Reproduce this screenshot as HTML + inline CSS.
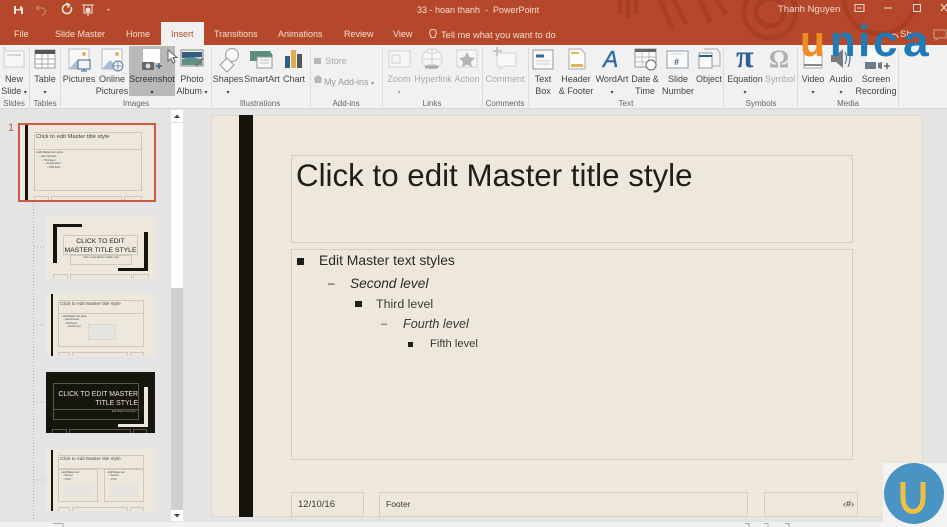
<!DOCTYPE html>
<html><head><meta charset="utf-8"><style>
*{box-sizing:border-box}
html,body{margin:0;padding:0}
body{width:947px;height:527px;overflow:hidden;position:relative;background:#e4e4e5;font-family:"Liberation Sans",sans-serif;filter:blur(.3px)}
.a{position:absolute;white-space:nowrap}
.t{position:absolute;top:29px;font-size:9px;color:#f3ddd3;white-space:nowrap}
.l{position:absolute;font-size:9px;line-height:12px;color:#444;text-align:center;white-space:nowrap;transform:translateX(-50%)}
.l i{font-style:normal;font-size:6px}
.g{color:#a9a9a9}
.c{position:absolute;top:99px;font-size:8px;color:#666;white-space:nowrap;transform:translateX(-50%)}
.s{position:absolute;top:47px;width:1px;height:60px;background:#dcdcdc}
.th{position:absolute;background:#ede7dc;overflow:hidden}
.box{position:absolute;border:1px solid #cfc8bd;white-space:nowrap}
.mb{position:absolute;border:1px solid #d4cdc2}
.u{position:absolute;top:17px;font-size:44px;line-height:50px;font-weight:700;color:#1f7ab8;transform-origin:left}
svg{position:absolute;overflow:visible}
</style></head><body>
<!-- title bar -->
<div class="a" style="left:0;top:0;width:947px;height:45px;background:#b5482a"></div>
<svg style="left:0;top:0" width="947" height="45" viewBox="0 0 947 45"><g fill="none" stroke="#a83f24" stroke-width="5"><circle cx="770" cy="12" r="14"/><circle cx="770" cy="12" r="26"/><circle cx="880" cy="-2" r="36"/><path d="M620 0v14M628 0v18M636 0v14M660 0l12 28M674 0l12 24M700 0l10 22M716 0l10 14"/></g></svg>
<svg style="left:0;top:0" width="120" height="22" viewBox="0 0 120 22"><path d="M14 6h7l2 2v6h-9z" fill="#f4e7e1"/><rect x="16" y="6" width="4" height="3" fill="#b5482a"/><rect x="16" y="10.500" width="5" height="3.500" fill="#b5482a"/><path d="M36 8h6a3.500 3.500 0 0 1 0 7M36 8l3-2.500M36 8l3 2.500" stroke="#c98068" fill="none" stroke-width="1.300"/><path d="M69 5a4.500 4.500 0 1 0 2 2M66.500 3l3 2-2 2.500" stroke="#f6ebe5" fill="none" stroke-width="1.500"/><path d="M82 5h12M84 5v8h8V5M88 13v3" stroke="#e9c9bb" fill="none" stroke-width="1.200"/><circle cx="88" cy="10" r="2.500" fill="#f1dbd2"/><path d="M107 9h3l-1.500 2z" fill="#e9c9bb"/></svg>
<div class="a" style="left:417px;top:5px;font-size:9px;color:#f3ddd3">33 - hoan thanh&nbsp; -&nbsp; PowerPoint</div>
<div class="a" style="left:778px;top:4px;font-size:9.500px;color:#f1dcd3">Thanh Nguyen</div>
<svg style="left:850px;top:0" width="97" height="20" viewBox="0 0 97 20"><rect x="5" y="4.500" width="9" height="7" fill="none" stroke="#f3ddd3"/><path d="M7 8h5" stroke="#f3ddd3"/><path d="M34 8h8" stroke="#f3ddd3"/><rect x="63.500" y="4.500" width="7" height="7" fill="none" stroke="#f3ddd3"/><path d="M91 4l6 7M97 4l-6 7" stroke="#f3ddd3"/></svg>
<!-- tabs -->
<div class="t" style="left:14px">File</div>
<div class="t" style="left:55px">Slide Master</div>
<div class="t" style="left:126px">Home</div>
<div class="a" style="left:161px;top:22px;width:43px;height:23px;background:#f1f1f1"></div>
<div class="t" style="left:171px;color:#b5482a">Insert</div>
<div class="t" style="left:214px">Transitions</div>
<div class="t" style="left:278px">Animations</div>
<div class="t" style="left:344px">Review</div>
<div class="t" style="left:393px">View</div>
<div class="t" style="left:441px;top:30px;font-size:9.300px">Tell me what you want to do</div>
<svg style="left:428px;top:28px" width="10" height="12" viewBox="0 0 10 12"><path d="M3 8C1 6 1 1.500 5 1.500S9 6 7 8v1.500H3z" fill="none" stroke="#f0d4c7"/></svg>
<svg style="left:885px;top:26px" width="62" height="18" viewBox="0 0 62 18"><path d="M5 12a4 4 0 1 1 8 0" fill="none" stroke="#f3ddd3"/><path d="M49 4h12v8h-8l-2 2v-2h-2z" fill="none" stroke="#d99a82"/></svg>
<div class="a" style="left:900px;top:29px;font-size:9.500px;color:#f3ddd3">Sh</div>
<!-- ribbon -->
<div class="a" style="left:0;top:45px;width:947px;height:64px;background:#f1f1f1;border-bottom:1px solid #d8d8d8"></div>
<div class="a" style="left:129px;top:46px;width:46px;height:50px;background:#b9b9b9"></div>
<div class="s" style="left:29px"></div><div class="s" style="left:60px"></div><div class="s" style="left:211px"></div><div class="s" style="left:310px"></div><div class="s" style="left:382px"></div><div class="s" style="left:482px"></div><div class="s" style="left:528px"></div><div class="s" style="left:723px"></div><div class="s" style="left:797px"></div><div class="s" style="left:898px"></div>
<!-- ribbon icons -->
<svg style="left:0;top:45px" width="947" height="40" viewBox="0 45 947 40">
<rect x="4" y="51" width="20" height="16" fill="#f7f7f7" stroke="#cfcfcf"/><path d="M7 55h14" stroke="#d5d5d5" stroke-width="2"/><path d="M3 47l3 3" stroke="#ccc"/>
<rect x="35" y="50" width="20" height="18" fill="#fff" stroke="#999"/><rect x="35" y="50" width="20" height="4" fill="#555"/><path d="M35 59h20M35 64h20M42 54v14M48 54v14" stroke="#aaa"/>
<rect x="69" y="49" width="20" height="20" fill="#f8f8f8" stroke="#bbb"/><path d="M69 69l8-9 7 7 2 2z" fill="#a8bfd6"/><circle cx="84" cy="54" r="2" fill="#d8b566"/><rect x="78" y="60" width="12" height="9" fill="#f5f5f5" stroke="#41658a"/><path d="M84 69v2M81 71h6" stroke="#41658a"/>
<rect x="102" y="49" width="20" height="20" fill="#f8f8f8" stroke="#bbb"/><path d="M102 69l8-9 7 7 2 2z" fill="#a8bfd6"/><circle cx="117" cy="54" r="2" fill="#d8b566"/><circle cx="118" cy="66" r="5" fill="#f1f1f1" stroke="#5e82a6"/><path d="M113 66h10M118 61v10" stroke="#5e82a6" stroke-width=".7"/>
<rect x="143" y="49" width="17" height="14" fill="#fdfdfd"/><rect x="142" y="62" width="12" height="8" rx="1" fill="#666"/><circle cx="148" cy="66" r="2.500" fill="#ddd"/><path d="M156 66h6M159 63v6" stroke="#41658a" stroke-width="1.500"/>
<rect x="181" y="50" width="22" height="16" fill="#eee" stroke="#888"/><path d="M182 52h20v5l-20 1z" fill="#365a80"/><path d="M182 59l8-2 12 2v6h-20z" fill="#5d9184"/><path d="M196 66l7-8" stroke="#777" stroke-width="2"/>
<circle cx="232" cy="55" r="6.500" fill="#f8f8f8" stroke="#999"/><path d="M227 58l7 7-7 7-7-7z" fill="#f8f8f8" stroke="#999"/>
<path d="M250 51h20l3 5-3 5h-20z" fill="#5b8d80"/><rect x="257" y="57" width="15" height="11" fill="#f8f8f8" stroke="#999"/><path d="M260 60h9M260 63h9" stroke="#bbb"/>
<rect x="285" y="56" width="5" height="12" fill="#2e5f85"/><rect x="291" y="50" width="5" height="18" fill="#dcae4f"/><rect x="297" y="54" width="5" height="14" fill="#555"/>
<path d="M314 58h7v6h-7z" fill="#b6b6b6"/><path d="M314 78l4-3 4 3-1 5h-6z" fill="#b6b6b6"/>
<g fill="#f6f6f6" stroke="#d2d2d2"><rect x="389" y="51" width="21" height="16"/><rect x="392" y="55" width="8" height="8"/><circle cx="432" cy="59" r="10"/><path d="M423 59h18M432 49v20M426 52q6 3 12 0M426 66q6-3 12 0" fill="none"/><rect x="457" y="50" width="20" height="17"/></g>
<path d="M425 67h13" stroke="#aaa" stroke-width="3"/>
<path d="M467 52l2.500 5 5.500 1-4 4 1 5-5-2.500-5 2.500 1-5-4-4 5.500-1z" fill="#b5b5b5"/>
<path d="M497 53h19v13h-12l-4 3v-3h-3z" fill="#f8f8f8" stroke="#d4d4d4"/><path d="M497 47v9M493 51h9" stroke="#c6c6c6" stroke-width="2"/>
<rect x="533" y="50" width="20" height="19" fill="#f8f8f8" stroke="#999"/><path d="M536 56h8" stroke="#41658a" stroke-width="3"/><path d="M536 61h14M536 64h14" stroke="#ccc"/>
<path d="M569 49h12l4 5v15h-16z" fill="#fbfbfb" stroke="#aaa"/><rect x="571" y="52" width="8" height="2" fill="#e0b75a"/><rect x="571" y="64" width="12" height="3" fill="#e0b75a"/>
<text x="603" y="67" font-family="Liberation Sans" font-style="italic" font-size="23" fill="#2d6ca8" stroke="#2d6ca8" stroke-width=".4">A</text>
<rect x="635" y="49" width="21" height="18" fill="#fbfbfb" stroke="#999"/><rect x="635" y="49" width="21" height="3" fill="#666"/><path d="M635 57h21M635 62h21M642 52v15M649 52v15" stroke="#bbb"/><circle cx="651" cy="65" r="5" fill="#fff" stroke="#666"/>
<rect x="667" y="51" width="21" height="17" fill="#fbfbfb" stroke="#8a9db0"/><path d="M671 54h13" stroke="#ccc"/><text x="674" y="65" font-family="Liberation Sans" font-weight="700" font-size="9" fill="#41658a">#</text>
<rect x="699" y="53" width="13" height="15" fill="#fbfbfb" stroke="#999"/><path d="M699 56h13" stroke="#2e5f85" stroke-width="2"/><path d="M704 49h13l3 4v13h-8" fill="none" stroke="#aaa"/>
<text x="736" y="67" font-family="Liberation Serif" font-weight="700" font-size="32" fill="#2d5f96">π</text>
<text x="769" y="67" font-family="Liberation Serif" font-weight="700" font-size="25" fill="#aeaeae">Ω</text>
<rect x="804" y="53" width="18" height="15" fill="#fbfbfb" stroke="#aaa"/><path d="M804 65h18" stroke="#888" stroke-width="2"/>
<path d="M831 55h5l7-6v19l-7-6h-5z" fill="#7a7a7a"/><path d="M845 52q3 6 0 12M848 49q4 9 0 18" stroke="#41658a" fill="none"/>
<rect x="867" y="49" width="17" height="13" fill="#fafafa"/><rect x="865" y="62" width="11" height="7" fill="#6d7d8c"/><path d="M878 63l4-1v7l-4-1z" fill="#6d7d8c"/><path d="M884 66h6M887 63v6" stroke="#555" stroke-width="1.300"/>
</svg>
<!-- ribbon labels -->
<div class="l" style="left:14px;top:73px">New<br>Slide <i>▾</i></div>
<div class="l" style="left:45px;top:73px">Table<br><i>▾</i></div>
<div class="l" style="left:79px;top:73px">Pictures</div>
<div class="l" style="left:112px;top:73px">Online<br>Pictures</div>
<div class="l" style="left:152px;top:73px;color:#333">Screenshot<br><i>▾</i></div>
<div class="l" style="left:192px;top:73px">Photo<br>Album <i>▾</i></div>
<div class="l" style="left:228px;top:73px">Shapes<br><i>▾</i></div>
<div class="l" style="left:262px;top:73px">SmartArt</div>
<div class="l" style="left:294px;top:73px">Chart</div>
<div class="l g" style="left:336px;top:55px">Store</div>
<div class="l g" style="left:349px;top:76px;color:#999">My Add-ins <i>▾</i></div>
<div class="l g" style="left:399px;top:73px">Zoom<br><i>▾</i></div>
<div class="l g" style="left:433px;top:73px">Hyperlink</div>
<div class="l g" style="left:467px;top:73px">Action</div>
<div class="l g" style="left:505px;top:73px">Comment</div>
<div class="l" style="left:543px;top:73px">Text<br>Box</div>
<div class="l" style="left:576px;top:73px">Header<br>&amp; Footer</div>
<div class="l" style="left:612px;top:73px">WordArt<br><i>▾</i></div>
<div class="l" style="left:645px;top:73px">Date &amp;<br>Time</div>
<div class="l" style="left:678px;top:73px">Slide<br>Number</div>
<div class="l" style="left:709px;top:73px">Object</div>
<div class="l" style="left:745px;top:73px">Equation<br><i>▾</i></div>
<div class="l g" style="left:780px;top:73px">Symbol</div>
<div class="l" style="left:813px;top:73px">Video<br><i>▾</i></div>
<div class="l" style="left:841px;top:73px">Audio<br><i>▾</i></div>
<div class="l" style="left:876px;top:73px">Screen<br>Recording</div>
<div class="c" style="left:14px">Slides</div><div class="c" style="left:45px">Tables</div><div class="c" style="left:136px">Images</div><div class="c" style="left:260px">Illustrations</div><div class="c" style="left:346px">Add-ins</div><div class="c" style="left:432px">Links</div><div class="c" style="left:505px">Comments</div><div class="c" style="left:626px">Text</div><div class="c" style="left:761px">Symbols</div><div class="c" style="left:848px">Media</div>
<svg style="left:167px;top:49px" width="11" height="16" viewBox="0 0 11 16"><path d="M1 1v11l3-2.500 2 4.500 2-1-2-4.500h4z" fill="#fff" stroke="#666"/></svg>
<!-- unica logo -->
<div class="u" style="left:800px;color:#f08c24;transform:scaleX(.93)">u</div>
<div class="u" style="left:829.500px;transform:scaleX(.95)">n</div>
<div class="u" style="left:858px">i</div>
<div class="u" style="left:873px">c</div>
<div class="u" style="left:903px;transform:scaleX(1.050)">a</div>
<!-- left pane -->
<div class="a" style="left:8px;top:122px;font-size:11px;color:#c55a3f">1</div>
<svg style="left:30px;top:203px" width="20" height="318"><path d="M3.500 0V318M4 44h11M4 122h11M4 199h11M4 277h11" stroke="#b5b5b5" stroke-dasharray="1 2" fill="none"/></svg>
<div class="a" style="left:171px;top:110px;width:12px;height:400px;background:#cfcfd0"></div>
<div class="a" style="left:171px;top:110px;width:12px;height:178px;background:#fff"></div>
<div class="a" style="left:171px;top:110px;width:12px;height:13px;background:#fff;border-bottom:1px solid #e0e0e0"></div>
<svg style="left:171px;top:111px" width="12" height="12"><path d="M3 7h6L6 3.500z" fill="#444"/></svg>
<div class="a" style="left:171px;top:510px;width:12px;height:11px;background:#fff"></div>
<svg style="left:171px;top:511px" width="12" height="10"><path d="M3 3h6L6 6.500z" fill="#444"/></svg>
<!-- thumb 1 -->
<div class="th" style="left:18px;top:123px;width:138px;height:79px;border:2px solid #cc5a40">
<div class="a" style="left:5px;top:0;width:3px;height:75px;background:#15150f"></div>
<div class="box" style="left:14px;top:7px;width:108px;height:18px"><div class="a" style="left:1px;top:1px;font-size:5.800px;color:#444">Click to edit Master title style</div></div>
<div class="box" style="left:14px;top:24px;width:108px;height:42px"><div class="a" style="left:1px;top:1px;font-size:2.600px;line-height:3.800px;color:#444">▪ Edit Master text styles<br>&nbsp;&nbsp;&nbsp;&nbsp;– Second level<br>&nbsp;&nbsp;&nbsp;&nbsp;&nbsp;&nbsp;&nbsp;&nbsp;▪ Third level<br>&nbsp;&nbsp;&nbsp;&nbsp;&nbsp;&nbsp;&nbsp;&nbsp;&nbsp;&nbsp;&nbsp;&nbsp;– Fourth level<br>&nbsp;&nbsp;&nbsp;&nbsp;&nbsp;&nbsp;&nbsp;&nbsp;&nbsp;&nbsp;&nbsp;&nbsp;&nbsp;&nbsp;&nbsp;&nbsp;▪ Fifth level</div></div>
<div class="box" style="left:14px;top:71px;width:15px;height:8px"></div><div class="box" style="left:31px;top:71px;width:71px;height:8px"></div><div class="box" style="left:104px;top:71px;width:18px;height:8px"></div>
</div>
<!-- thumb 2 -->
<div class="th" style="left:46px;top:217px;width:109px;height:62px">
<div class="a" style="left:7px;top:7px;width:29px;height:3px;background:#15150f"></div><div class="a" style="left:7px;top:7px;width:4px;height:39px;background:#15150f"></div>
<div class="a" style="left:72px;top:51px;width:30px;height:3px;background:#15150f"></div><div class="a" style="left:98px;top:15px;width:4px;height:39px;background:#15150f"></div>
<div class="box" style="left:17px;top:18px;width:75px;height:20px;font-size:6.800px;line-height:9px;color:#222;text-align:center;padding-top:1px">CLICK TO EDIT<br>MASTER TITLE STYLE</div>
<div class="box" style="left:24px;top:38px;width:62px;height:10px;font-size:2.500px;color:#555;text-align:center">Click to edit Master subtitle style</div>
<div class="box" style="left:7px;top:57px;width:15px;height:6px"></div><div class="box" style="left:24px;top:57px;width:62px;height:6px"></div><div class="box" style="left:87px;top:57px;width:16px;height:6px"></div>
</div>
<!-- thumb 3 -->
<div class="th" style="left:46px;top:294px;width:109px;height:62px">
<div class="a" style="left:5px;top:0;width:2px;height:62px;background:#15150f"></div>
<div class="box" style="left:12px;top:6px;width:86px;height:14px"><div class="a" style="left:1px;top:1px;font-size:4.800px;color:#555">Click to edit Master title style</div></div>
<div class="box" style="left:12px;top:19px;width:86px;height:34px"><div class="a" style="left:3px;top:1px;font-size:2.400px;line-height:3.400px;color:#444">▪ Edit Master text styles<br>&nbsp;&nbsp;– Second level<br>&nbsp;&nbsp;&nbsp;&nbsp;▪ Third level<br>&nbsp;&nbsp;&nbsp;&nbsp;&nbsp;&nbsp;– Fourth level</div><div class="a" style="left:29px;top:10px;width:28px;height:16px;background:#e5e4df;border:1px solid #d8d8d2"></div></div>
<div class="box" style="left:12px;top:58px;width:12px;height:6px"></div><div class="box" style="left:26px;top:58px;width:56px;height:6px"></div><div class="box" style="left:84px;top:58px;width:14px;height:6px"></div>
</div>
<!-- thumb 4 -->
<div class="th" style="left:46px;top:372px;width:109px;height:61px;background:#16160f">
<div class="a" style="left:7px;top:11px;width:86px;height:27px;border:1px solid #5a574e"></div>
<div class="a" style="left:7px;top:37px;width:86px;height:11px;border:1px solid #5a574e"></div>
<div class="a" style="left:9px;top:18px;width:83px;font-size:6.900px;line-height:9px;color:#e8e3d8;text-align:right">CLICK TO EDIT MASTER<br>TITLE STYLE</div>
<div class="a" style="left:66px;top:38px;font-size:2.500px;color:#bbb">Edit Master text styles</div>
<div class="a" style="left:72px;top:52px;width:30px;height:3px;background:#ede7dc"></div><div class="a" style="left:98px;top:15px;width:4px;height:40px;background:#ede7dc"></div>
<div class="box" style="left:6px;top:57px;width:15px;height:7px;border-color:#5a574e"></div><div class="box" style="left:23px;top:57px;width:62px;height:7px;border-color:#5a574e"></div><div class="box" style="left:87px;top:57px;width:14px;height:7px;border-color:#5a574e"></div>
</div>
<!-- thumb 5 -->
<div class="th" style="left:46px;top:449px;width:109px;height:62px">
<div class="a" style="left:5px;top:1px;width:2px;height:61px;background:#15150f"></div>
<div class="box" style="left:12px;top:6px;width:86px;height:14px"><div class="a" style="left:1px;top:1px;font-size:4.800px;color:#555">Click to edit Master title style</div></div>
<div class="box" style="left:12px;top:20px;width:40px;height:33px"><div class="a" style="left:6px;top:15px;width:28px;height:12px;background:#e5e4df"></div><div class="a" style="left:2px;top:1px;font-size:2.400px;line-height:3.400px;color:#444">▪ Edit Master text<br>&nbsp;&nbsp;– Second<br>&nbsp;&nbsp;&nbsp;&nbsp;▪ Third</div></div>
<div class="box" style="left:58px;top:20px;width:40px;height:33px"><div class="a" style="left:6px;top:15px;width:28px;height:12px;background:#e5e4df"></div><div class="a" style="left:2px;top:1px;font-size:2.400px;line-height:3.400px;color:#444">▪ Edit Master text<br>&nbsp;&nbsp;– Second<br>&nbsp;&nbsp;&nbsp;&nbsp;▪ Third</div></div>
<div class="box" style="left:12px;top:58px;width:12px;height:6px"></div><div class="box" style="left:26px;top:58px;width:56px;height:6px"></div><div class="box" style="left:84px;top:58px;width:14px;height:6px"></div>
</div>
<!-- main slide -->
<div class="a" style="left:211px;top:115px;width:712px;height:402px;background:#eee8dc;border:1px solid #dedad2"></div>
<div class="a" style="left:239px;top:115px;width:14px;height:402px;background:#15150d"></div>
<div class="mb" style="left:291px;top:155px;width:562px;height:88px"></div>
<div class="a" style="left:296px;top:158px;font-size:31.300px;line-height:36px;color:#1e1e18">Click to edit Master title style</div>
<div class="mb" style="left:291px;top:249px;width:562px;height:211px"></div>
<div class="a" style="left:297px;top:258px;width:7px;height:7px;background:#1e1e18"></div>
<div class="a" style="left:319px;top:253px;font-size:13.900px;line-height:15px;color:#2a2a24">Edit Master text styles</div>
<div class="a" style="left:328px;top:276px;font-size:12px;line-height:15px;color:#2a2a24">–</div>
<div class="a" style="left:350px;top:276px;font-size:13.700px;line-height:15px;font-style:italic;color:#2a2a24">Second level</div>
<div class="a" style="left:355px;top:301px;width:7px;height:6px;background:#1e1e18"></div>
<div class="a" style="left:376px;top:297px;font-size:12.400px;line-height:14px;color:#3a3a34">Third level</div>
<div class="a" style="left:381px;top:317px;font-size:11px;line-height:14px;color:#3a3a34">–</div>
<div class="a" style="left:403px;top:317px;font-size:12.600px;line-height:14px;font-style:italic;color:#3a3a34">Fourth level</div>
<div class="a" style="left:408px;top:342px;width:5px;height:5px;background:#1e1e18"></div>
<div class="a" style="left:430px;top:337px;font-size:11.200px;line-height:14px;color:#3a3a34">Fifth level</div>
<div class="mb" style="left:291px;top:492px;width:73px;height:25px"></div>
<div class="a" style="left:298px;top:499px;font-size:9.500px;color:#3a3a34">12/10/16</div>
<div class="mb" style="left:379px;top:492px;width:369px;height:25px"></div>
<div class="a" style="left:386px;top:499px;font-size:8.500px;color:#3a3a34">Footer</div>
<div class="mb" style="left:764px;top:492px;width:94px;height:25px"></div>
<div class="a" style="left:843px;top:499px;font-size:9px;color:#3a3a34">‹#›</div>
<!-- status bar -->
<div class="a" style="left:0;top:522px;width:947px;height:5px;background:#f1f1f1"></div>
<svg style="left:0;top:523px" width="947" height="4"><path d="M53 .5h10v4H53M745 .5h4v4h-4M764 .5h4v4h-4M785 .5h4v4h-4" stroke="#aaa" fill="none"/></svg>
<!-- U badge -->
<div class="a" style="left:883px;top:463px;width:64px;height:64px;background:#f3f3f3"></div>
<div class="a" style="left:884px;top:463px;width:60px;height:61px;border-radius:50%;background:#4a94c4"></div>
<svg style="left:884px;top:463px" width="60" height="62" viewBox="0 0 60 62"><path d="M19 19v16c0 18 20 18 20 0V19" fill="none" stroke="#f0c140" stroke-width="5"/></svg>
</body></html>
